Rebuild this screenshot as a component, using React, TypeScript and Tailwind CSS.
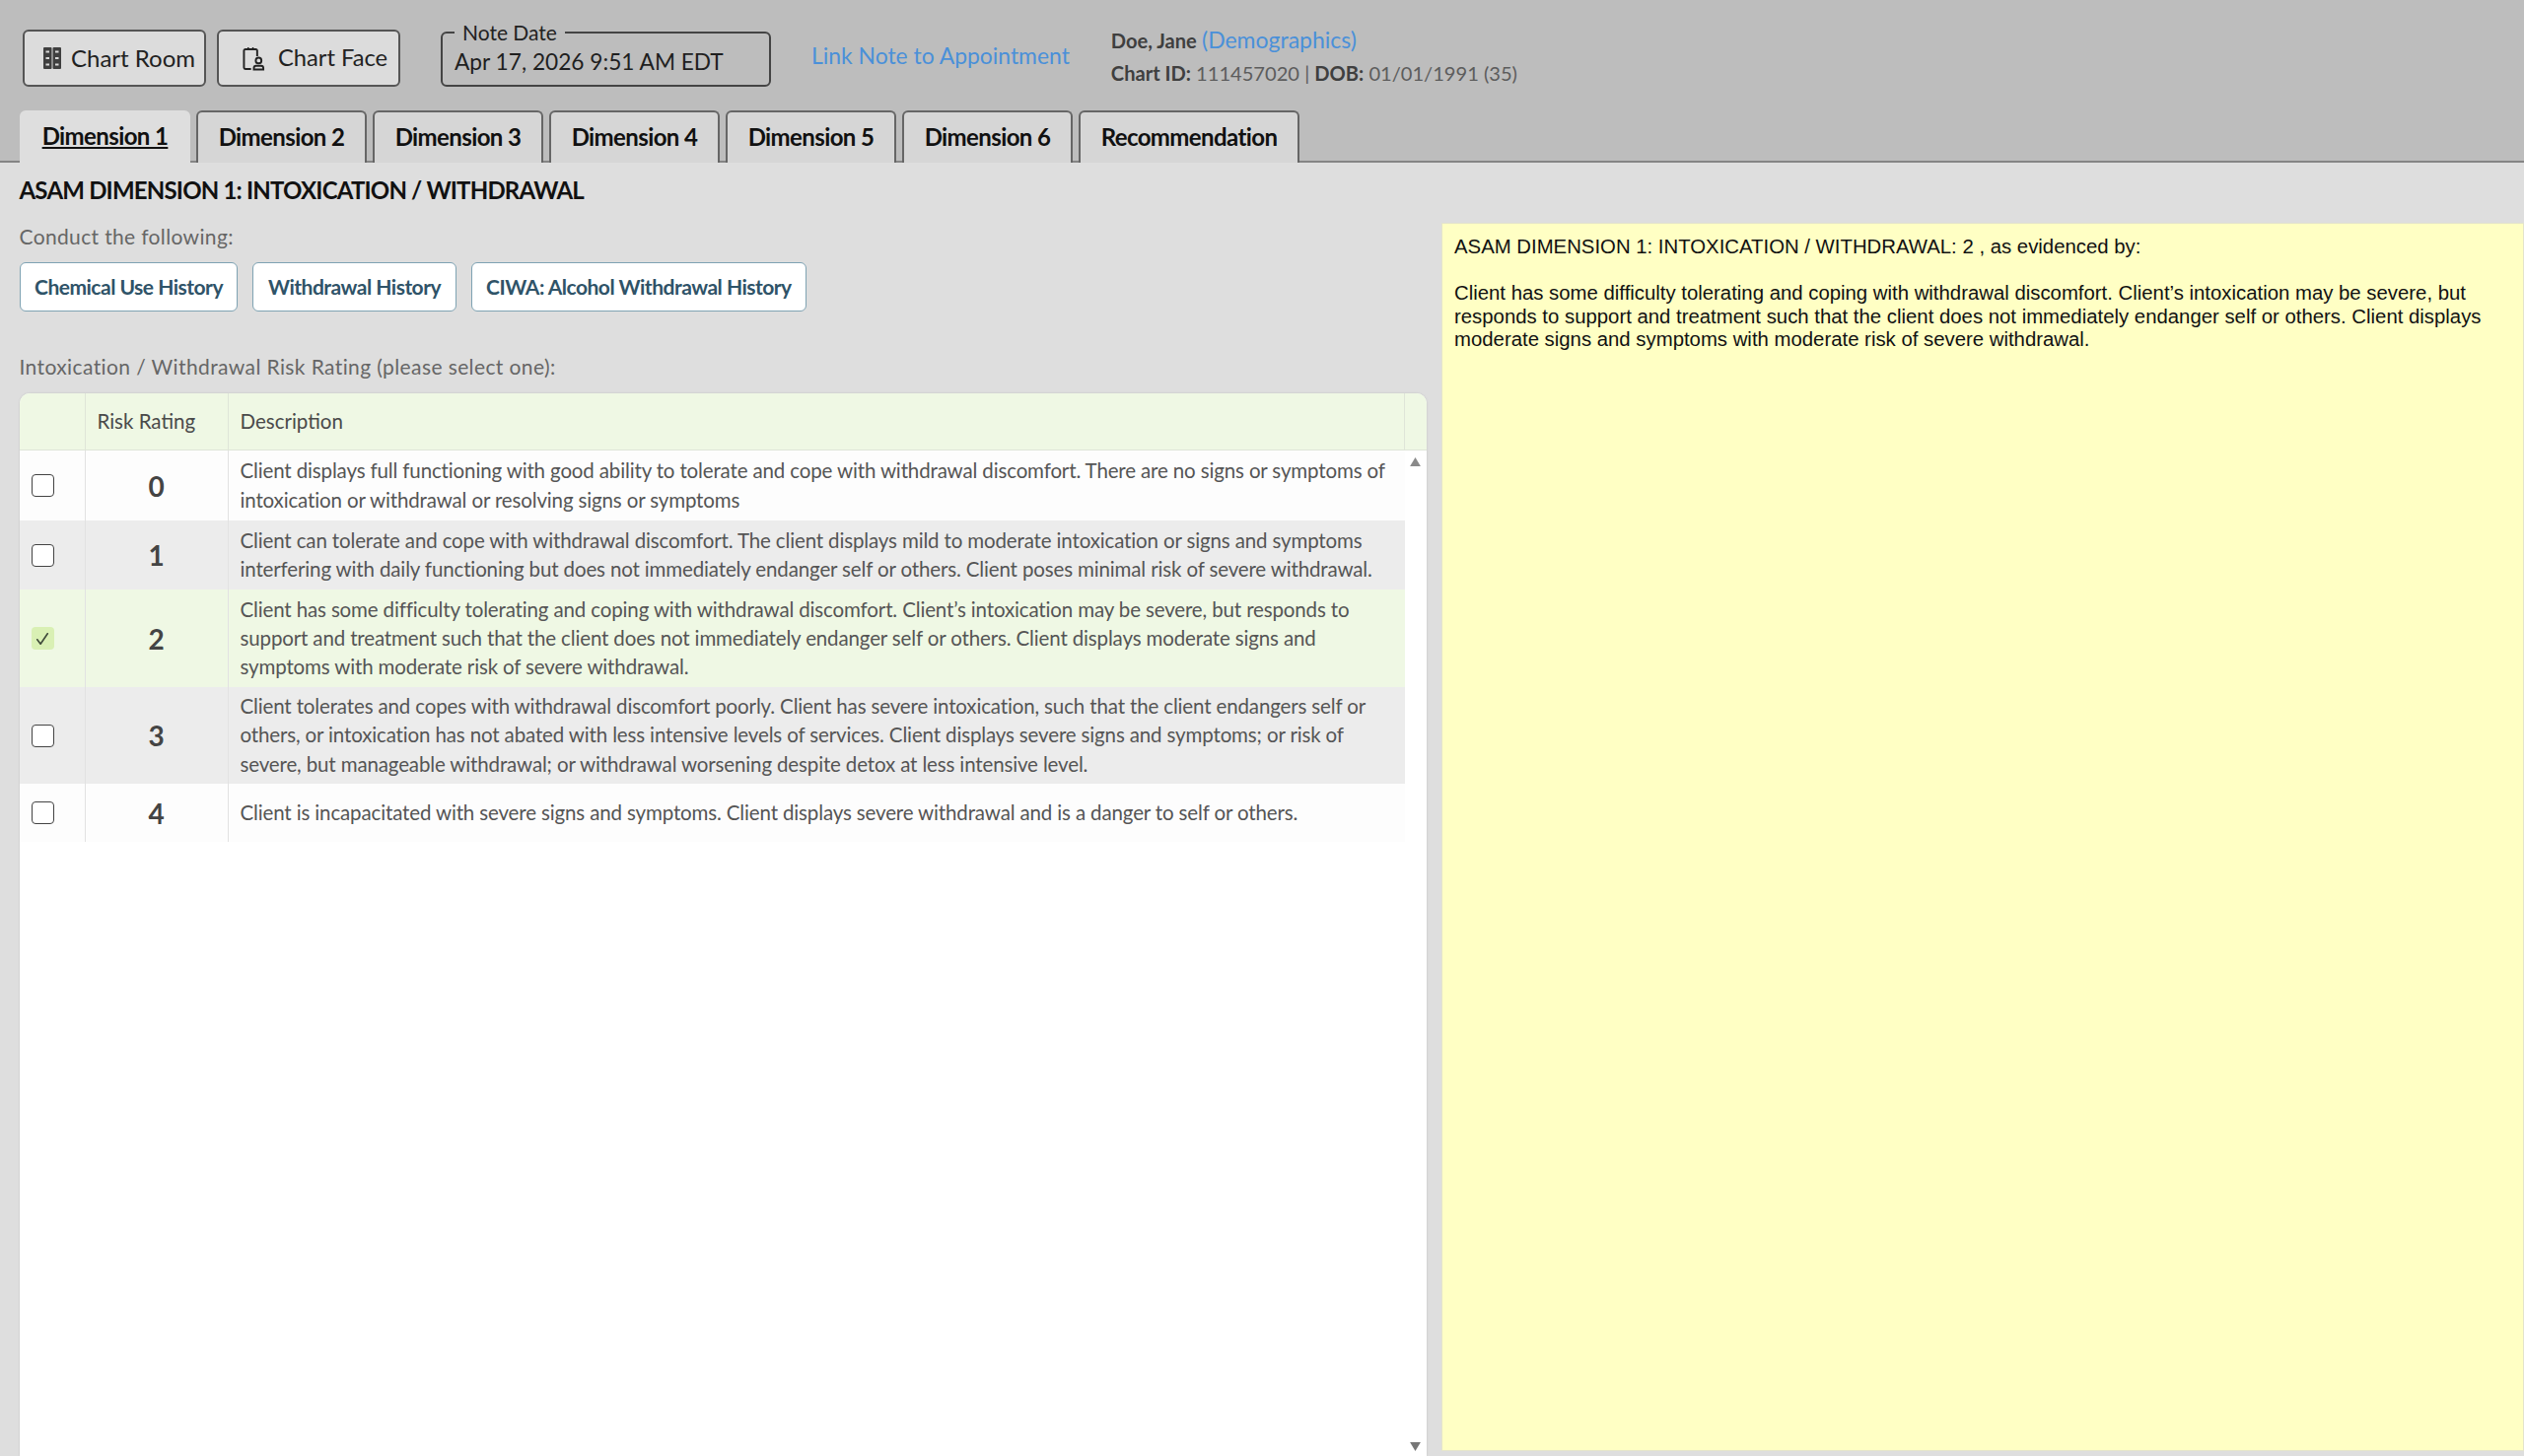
const rows = [
  {
    rating: '0',
    height: 'h-[71px]',
    bg: 'bg-[#fdfdfd]',
    text: 'Client displays full functioning with good ability to tolerate and cope with withdrawal discomfort. There are no signs or symptoms of intoxication or withdrawal or resolving signs or symptoms',
  },
  {
    rating: '1',
    height: 'h-[70px]',
    bg: 'bg-[#ececec]',
    text: 'Client can tolerate and cope with withdrawal discomfort. The client displays mild to moderate intoxication or signs and symptoms interfering with daily functioning but does not immediately endanger self or others. Client poses minimal risk of severe withdrawal.',
  },
  {
    rating: '2',
    height: 'h-[99px]',
    bg: 'bg-[#eff8e4]',
    checked: true,
    text: 'Client has some difficulty tolerating and coping with withdrawal discomfort. Client’s intoxication may be severe, but responds to support and treatment such that the client does not immediately endanger self or others. Client displays moderate signs and symptoms with moderate risk of severe withdrawal.',
  },
  {
    rating: '3',
    height: 'h-[98px]',
    bg: 'bg-[#ececec]',
    text: 'Client tolerates and copes with withdrawal discomfort poorly. Client has severe intoxication, such that the client endangers self or others, or intoxication has not abated with less intensive levels of services. Client displays severe signs and symptoms; or risk of severe, but manageable withdrawal; or withdrawal worsening despite detox at less intensive level.',
  },
  {
    rating: '4',
    height: 'h-[59px]',
    bg: 'bg-[#fdfdfd]',
    text: 'Client is incapacitated with severe signs and symptoms. Client displays severe withdrawal and is a danger to self or others.',
  },
];

const tabs = ['Dimension 1', 'Dimension 2', 'Dimension 3', 'Dimension 4', 'Dimension 5', 'Dimension 6', 'Recommendation'];
const actions = ['Chemical Use History', 'Withdrawal History', 'CIWA: Alcohol Withdrawal History'];

function LockerIcon() {
  return (
    <svg viewBox="0 0 18 22" className="h-[22px] w-[18px] shrink-0">
      <rect x="0" y="0" width="8.500" height="22" rx="1" fill="#3f3f3f" />
      <rect x="9.500" y="0" width="8.500" height="22" rx="1" fill="#3f3f3f" />
      <path d="M2.500 3.500h3.500v2H2.500zM2.500 10h3.500v2H2.500zM2.500 16.500h3.500v2H2.500zM12 3.500h3.500v2H12zM12 10h3.500v2H12zM12 16.500h3.500v2H12z" fill="#d8d8d8" />
    </svg>
  );
}

function ChartFaceIcon() {
  return (
    <svg viewBox="0 0 24 25" className="h-[25px] w-[23px] shrink-0 text-[#222]" fill="none" stroke="currentColor" strokeWidth="2">
      <path d="M9 23.500H3a1.500 1.500 0 0 1-1.500-1.500V4A1.500 1.500 0 0 1 3 2.500h11A1.500 1.500 0 0 1 15.500 4v6" />
      <path d="M6 0.500v3M11 0.500v3" strokeWidth="1.500" />
      <circle cx="17" cy="14.500" r="3" />
      <path d="M12 24v-1.500a2.500 2.500 0 0 1 2.500-2.500h5a2.500 2.500 0 0 1 2.500 2.500V24z" />
    </svg>
  );
}

function RowCheck({ checked }: { checked?: boolean }) {
  if (checked) {
    return (
      <span className="flex h-[23px] w-[23px] items-center justify-center rounded-[4px] bg-[#d9f0b4]">
        <svg viewBox="0 0 24 24" className="h-[18px] w-[18px]" fill="none" stroke="#3f4a3a" strokeWidth="2.200" strokeLinecap="round" strokeLinejoin="round">
          <path d="M5 13l4.500 6L19 5" />
        </svg>
      </span>
    );
  }
  return <span className="block h-[23px] w-[23px] rounded-[4px] border-[1.5px] border-[#444] bg-white" />;
}

export default function App() {
  return (
    <div className="flex h-[1477px] w-[2560px] flex-col overflow-hidden bg-[#dedede] font-['Lato','Liberation_Sans',sans-serif]">
      {/* top bar */}
      <div className="h-[165px] shrink-0 border-b-2 border-[#858585] bg-[#bdbdbd]">
        <div className="flex h-[112px] pt-[30px] pl-[23px]">
          <button className="flex h-[58px] w-[186px] items-center gap-[10px] rounded-[6px] border-2 border-[#555] bg-[#dcdcdc] pl-[19px] text-[24px] text-[#222]">
            <LockerIcon />
            Chart Room
          </button>
          <button className="ml-[11px] flex h-[58px] w-[186px] items-center gap-[13px] rounded-[6px] border-2 border-[#555] bg-[#dcdcdc] pl-[24px] text-[23.700px] text-[#222]">
            <ChartFaceIcon />
            Chart Face
          </button>
          <fieldset className="-mt-[9px] ml-[41px] h-[67px] w-[335px] rounded-[6px] border-2 border-[#444] pl-[12px]">
            <legend className="px-[8px] text-[21px] leading-[24px] text-[#222]">Note Date</legend>
            <div className="text-[22.700px] leading-[36px] text-[#1f1f1f]">Apr 17, 2026 9:51 AM EDT</div>
          </fieldset>
          <a className="mt-[10px] ml-[41px] text-[22.900px] leading-[32px] text-[#4a90d9]">Link Note to Appointment</a>
          <div className="-mt-[6px] ml-[42px] text-[20.100px] leading-[33px] text-[#5c5c5c]">
            <div>
              <span className="font-bold text-[#3f3f3f]">Doe, Jane</span>{' '}
              <span className="text-[23px] text-[#4a90d9]">(Demographics)</span>
            </div>
            <div>
              <span className="font-bold text-[#3f3f3f]">Chart ID:</span> 111457020 | <span className="font-bold text-[#3f3f3f]">DOB:</span> 01/01/1991 (35)
            </div>
          </div>
        </div>
        <div className="flex h-[53px] items-end gap-[6px] pl-[20px]">
          {tabs.map((tab, i) => (
            <div
              key={tab}
              className={
                i === 0
                  ? 'relative z-10 flex h-[53px] w-[173px] items-center justify-center rounded-t-[6px] bg-[#dedede] pb-[2px] text-[24px] font-bold tracking-[-0.600px] text-[#111] underline'
                  : tab === 'Recommendation'
                    ? 'flex h-[53px] w-[224px] items-center justify-center rounded-t-[6px] border-2 border-b-0 border-[#666] bg-[#d6d6d6] pb-[2px] text-[24px] font-bold tracking-[-0.600px] text-[#111]'
                    : 'flex h-[53px] w-[173px] items-center justify-center rounded-t-[6px] border-2 border-b-0 border-[#666] bg-[#d6d6d6] pb-[2px] text-[24px] font-bold tracking-[-0.600px] text-[#111]'
              }
            >
              {tab}
            </div>
          ))}
        </div>
      </div>

      {/* body */}
      <div className="flex min-h-0 flex-1">
        <div className="flex w-[1462px] shrink-0 flex-col pl-[19.500px]">
          <h1 className="mt-[13px] text-[24px] leading-[30px] font-bold tracking-[-0.800px] text-[#111]">ASAM DIMENSION 1: INTOXICATION / WITHDRAWAL</h1>
          <p className="mt-[18px] text-[21px] leading-[28px] tracking-[0.350px] text-[#666]">Conduct the following:</p>
          <div className="mt-[12px] flex gap-[15px]">
            {actions.map((a) => (
              <button key={a} className="h-[50px] rounded-[6px] border border-[#7fa3b3] bg-white px-[14.500px] text-[21px] font-bold tracking-[-0.500px] text-[#2f5368]">
                {a}
              </button>
            ))}
          </div>
          <p className="mt-[42px] text-[21px] leading-[28px] tracking-[0.390px] text-[#666]">Intoxication / Withdrawal Risk Rating (please select one):</p>
          {/* table */}
          <div className="relative mt-[13px] flex min-h-0 w-[1427px] flex-1 flex-col overflow-hidden rounded-t-[10px] bg-white shadow-[0_0_2px_#bbb]">
            <div className="flex h-[58px] shrink-0 border-b border-[#dfe5d8] bg-[#eff8e4] text-[20.500px] text-[#4a4a4a]">
              <div className="w-[67px] border-r border-[#dfe5d8]" />
              <div className="flex w-[145px] items-center border-r border-[#dfe5d8] pl-[12px]">Risk Rating</div>
              <div className="flex w-[1193px] items-center border-r border-[#dfe5d8] pl-[12px]">Description</div>
            </div>
            {rows.map((r) => (
              <div key={r.rating} className={`flex w-[1405px] shrink-0 ${r.height} ${r.bg}`}>
                <div className="flex w-[67px] items-center border-r border-[#e2e2e2] pl-[12px]">
                  <RowCheck checked={r.checked} />
                </div>
                <div className="flex w-[145px] items-center justify-center border-r border-[#e2e2e2] text-[28px] font-bold text-[#444]">
                  {r.rating}
                </div>
                <div className="flex min-w-0 flex-1 items-center pr-[8px] pl-[12px] text-[20.500px] leading-[29.300px] tracking-[-0.140px] text-[#555]">
                  <span>{r.text}</span>
                </div>
              </div>
            ))}
            <svg viewBox="0 0 12 10" className="absolute top-[65px] right-[6px] h-[9px] w-[11px]" fill="#8a8a8a">
              <path d="M6 0l6 10H0z" />
            </svg>
            <svg viewBox="0 0 12 10" className="absolute right-[6px] bottom-[5px] h-[9px] w-[11px]" fill="#777">
              <path d="M6 10L0 0h12z" />
            </svg>
          </div>
        </div>
        <div className="mt-[61px] mb-[5px] flex-1 border border-[#e4e4cc] bg-[#ffffc4] pt-[12px] pr-[12px] pl-[12px] font-['Liberation_Sans',sans-serif] text-[20.350px] leading-[23.500px] text-[#111]">
          <p>ASAM DIMENSION 1: INTOXICATION / WITHDRAWAL: 2 , as evidenced by:</p>
          <p className="mt-[23.500px]">Client has some difficulty tolerating and coping with withdrawal discomfort. Client’s intoxication may be severe, but responds to support and treatment such that the client does not immediately endanger self or others. Client displays moderate signs and symptoms with moderate risk of severe withdrawal.</p>
        </div>
      </div>
    </div>
  );
}
